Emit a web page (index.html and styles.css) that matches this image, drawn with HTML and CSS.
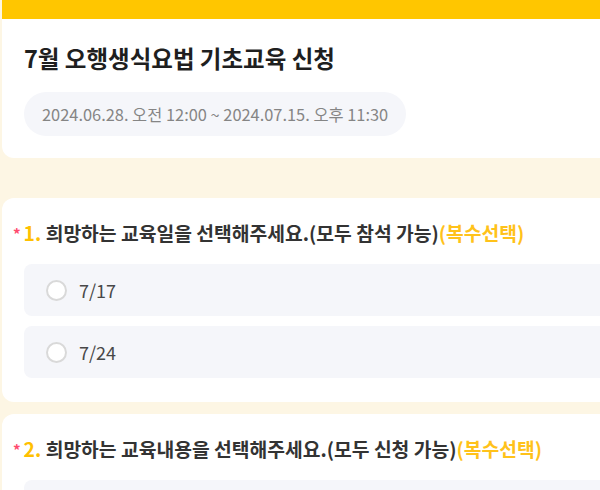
FILE: index.html
```html
<!DOCTYPE html>
<html>
<head>
  <title>7월 오행생식요법 기초교육 신청</title>
  <link rel="stylesheet" href="styles.css">
</head>
<body>
  <div class="page">
    <div class="card head">
      <h1 class="title">7월 오행생식요법 기초교육 신청</h1>
      <div class="period">2024.06.28. 오전 12:00 ~ 2024.07.15. 오후 11:30</div>
    </div>

    <div class="card question">
      <h2 class="qtitle"><span class="req">*</span><span class="num">1.</span> 희망하는 교육일을 선택해주세요.(모두 참석 가능)<span class="multi">(복수선택)</span></h2>
      <div class="options">
        <label class="option"><span class="radio"></span>7/17</label>
        <label class="option"><span class="radio"></span>7/24</label>
      </div>
    </div>

    <div class="card question">
      <h2 class="qtitle"><span class="req">*</span><span class="num">2.</span> 희망하는 교육내용을 선택해주세요.(모두 신청 가능)<span class="multi">(복수선택)</span></h2>
      <div class="options">
        <div class="option"></div>
      </div>
    </div>
  </div>
</body>
</html>
```

FILE: styles.css
```css
body {
  margin: 0;
  background-color: #fdf6e4;
  font-family: "Noto Sans CJK KR", "Noto Sans", sans-serif;
  overflow: hidden;
}
.page {
  width: 640px;
  margin-left: 2px;
}
.card {
  background-color: #fff;
  border-radius: 12px;
}
.head {
  border-top: 19px solid #ffc600;
  border-radius: 0 0 12px 12px;
  padding: 23px 22px 22px;
  margin-bottom: 40px;
}
.title {
  margin: 0;
  font-size: 23.5px;
  line-height: 32px;
  font-weight: 700;
  color: #1f1f1f;
}
.period {
  display: inline-block;
  margin-top: 18px;
  height: 44px;
  line-height: 44px;
  padding: 0 18px;
  border-radius: 22px;
  background-color: #f5f6fa;
  color: #858585;
  font-size: 16.4px;
}
.question {
  padding: 22px 22px 24px;
  margin-bottom: 12px;
}
.qtitle {
  margin: 0 0 17px -11px;
  font-size: 19.3px;
  line-height: 27px;
  font-weight: 700;
  color: #333;
}
.req {
  color: #ff4b6e;
  font-size: 15px;
  margin-right: 3px;
  vertical-align: 1px;
}
.num {
  color: #ffc000;
}
.multi {
  color: #ffc21a;
}
.options {
  display: flex;
  flex-direction: column;
  gap: 10px;
}
.option {
  display: flex;
  align-items: center;
  height: 52px;
  padding-left: 22px;
  border-radius: 8px;
  background-color: #f5f6fa;
  color: #484848;
  font-size: 18px;
}
.radio {
  width: 17px;
  height: 17px;
  border: 2px solid #d9d9d9;
  border-radius: 50%;
  background-color: #fff;
  margin-right: 12px;
}
```
